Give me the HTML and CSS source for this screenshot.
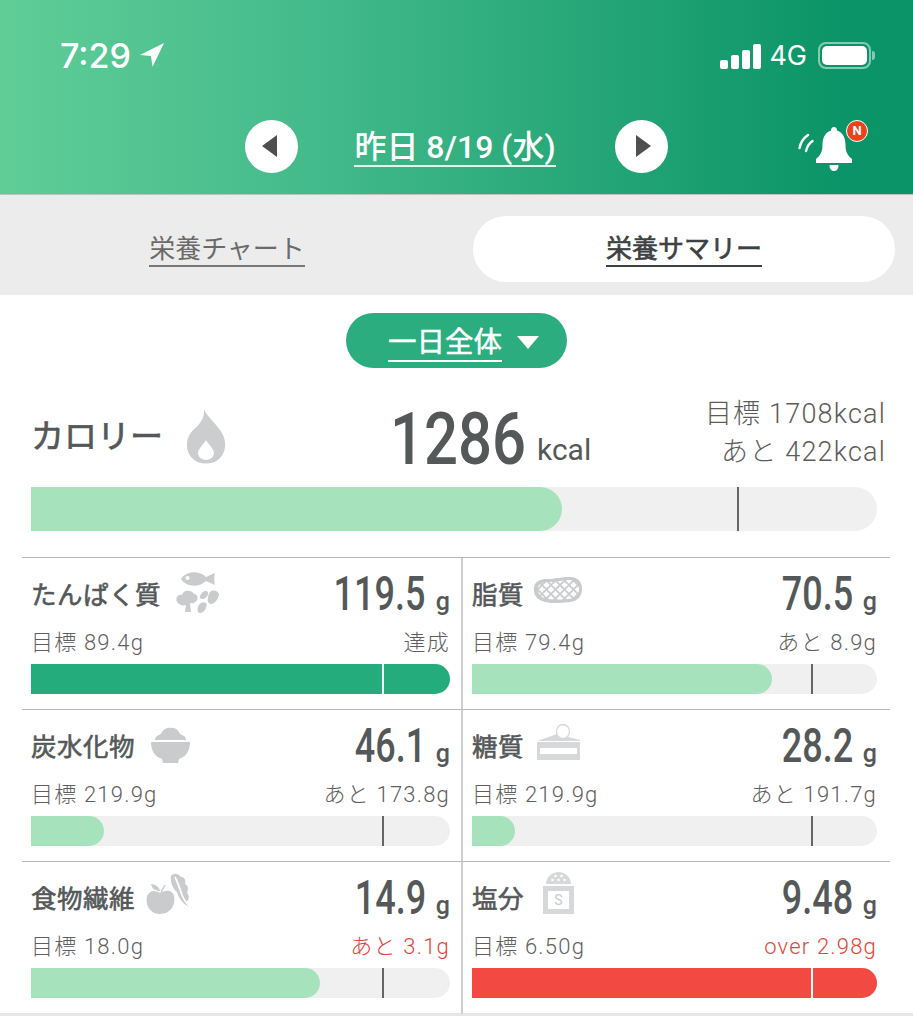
FILE: index.html
```html
<!DOCTYPE html>
<html lang="ja">
<head>
  <meta charset="UTF-8" />
  <title>栄養サマリー</title>
  <meta name="viewport" content="width=device-width, initial-scale=1.0" />
  <link rel="stylesheet" href="styles.css">
</head>
<body>
  <header class="top">
    <div class="status">
      <div class="status-left">
        <span class="time">7:29</span>
        <svg class="loc" viewBox="0 0 24 24"><path d="M24 0 L0 12 L11 13 L12.5 24 Z" fill="#fff"/></svg>
      </div>
      <div class="status-right">
        <div class="signal"><i class="s1"></i><i class="s2"></i><i class="s3"></i><i class="s4"></i></div>
        <span class="net">4G</span>
        <div class="battery"><div class="battery-in"></div></div>
        <div class="battery-tip"></div>
      </div>
    </div>
    <div class="nav">
      <div class="round"><span class="tri-left"></span></div>
      <div class="date"><span>昨日 8/19 (水)</span></div>
      <div class="round"><span class="tri-right"></span></div>
      <div class="bell">
        <svg viewBox="0 0 70 52" width="70" height="52">
          <path d="M1.5 28 C2.5 23 5.5 18 10 15" fill="none" stroke="#fff" stroke-width="2.4" stroke-linecap="round"/>
          <path d="M8 31 C9 27 11 23.5 14.5 21" fill="none" stroke="#fff" stroke-width="2.4" stroke-linecap="round"/>
          <path d="M36 7 C38 7 39 8.5 39 10.5 C45.5 12.5 47.5 19 47.5 25 C47.5 32 50 36 54 39 L54 43 L18 43 L18 39 C22 36 24.5 32 24.5 25 C24.5 19 26.5 12.5 33 10.5 C33 8.5 34 7 36 7 Z" fill="#fff"/>
          <path d="M31.5 45 L40.5 45 C40.5 49 38.5 51 36 51 C33.5 51 31.5 49 31.5 45 Z" fill="#fff"/>
        </svg>
        <span class="badge">N</span>
      </div>
    </div>
  </header>

  <div class="tabs">
    <div class="tab"><span>栄養チャート</span></div>
    <div class="tab active"><span>栄養サマリー</span></div>
  </div>

  <div class="filter-wrap">
    <div class="filter"><span>一日全体</span><i class="tri-down"></i></div>
  </div>

  <section class="calorie">
    <div class="cal-top">
      <div class="cal-label">
        <span>カロリー</span>
        <svg class="flame" viewBox="0 0 40 56"><path fill-rule="evenodd" d="M18 0 C21 8 30 14 36 24 C41 33 40 44 33 50 C27 56 13 56 7 50 C0 44 -1 33 4 25 C8 19 19 14 18 0 Z M20 31 C17 36 12 40 12 44 C12 48 16 51 20 51 C24 51 28 48 28 44 C28 40 23 36 20 31 Z" fill="#cbcdcf"/></svg>
      </div>
      <div class="cal-value"><b class="cal-num">1286</b><span class="cal-unit">kcal</span></div>
      <div class="cal-goal">目標 1708kcal<br>あと 422kcal</div>
    </div>
    <div class="bar bar-big">
      <div class="fill light" style="width:62.8%"></div>
      <i class="mark" style="left:83.5%"></i>
    </div>
  </section>

  <section class="grid">
    <div class="cell">
      <div class="head">
        <span class="name">たんぱく質</span>
        <svg class="icon ic-protein" width="44" height="43" viewBox="0 0 44 43">
          <path fill-rule="evenodd" d="M5 8 C10 0 23 -1 30 6 L39 2 C38 6 38 10 39 14 L30 10 C23 17 10 16 5 8 Z M11.5 5 a2 2 0 1 0 .1 0 Z" fill="#c9cbcd"/>
          <path d="M1 31 C-1 27 2 23 6 24 C7 19 15 18 18 23 C22 23 23 29 19 31 C17 33 15 32 14 32 L15 41 L9 41 L10 34 C7 35 3 34 1 31 Z" fill="#c9cbcd"/>
          <path d="M24 25 C26 20 30 19 32 21 C33 24 30 28 27 28 C25 28 23 27 24 25 Z" fill="#c9cbcd"/>
          <path d="M34 21 C37 18 42 20 43 23 C43 27 39 33 35 33 C32 33 31 29 32 27 C32 25 33 22 34 21 Z" fill="#c9cbcd"/>
          <path d="M22 36 C23 32 28 30 30 32 C32 34 29 41 25 42 C22 43 21 39 22 36 Z" fill="#c9cbcd"/>
        </svg>
        <span class="val"><b class="num">119.5</b><span class="g">g</span></span>
      </div>
      <div class="meta"><span>目標 89.4g</span><span>達成</span></div>
      <div class="bar"><div class="fill dark" style="width:100%"></div><i class="mark white" style="left:83.7%"></i></div>
    </div>

    <div class="cell right">
      <div class="head">
        <span class="name">脂質</span>
        <svg class="icon ic-fat" width="50" height="28" viewBox="0 0 50 28">
          <defs>
            <pattern id="lattice" width="9" height="9" patternUnits="userSpaceOnUse">
              <rect width="9" height="9" fill="#fff"/>
              <path d="M0 0 L9 9 M9 0 L0 9" stroke="#c9cbcd" stroke-width="1.7"/>
            </pattern>
          </defs>
          <path d="M1 11 C2 5 8 3 14 3 C22 3 28 1 37 1 C45 1 49 6 49 13 C49 21 44 25 37 26 C27 27 17 28 9 25 C3 23 0 17 1 11 Z" fill="#c9cbcd"/>
          <path d="M5 11 C6 8 10 6 15 6 C23 6 30 4 37 4 C43 4 46 8 46 13 C46 19 42 22 36 23 C27 24 18 24 11 22 C6 20 4 15 5 11 Z" fill="url(#lattice)"/>
        </svg>
        <span class="val"><b class="num">70.5</b><span class="g">g</span></span>
      </div>
      <div class="meta"><span>目標 79.4g</span><span>あと 8.9g</span></div>
      <div class="bar"><div class="fill light" style="width:74%"></div><i class="mark" style="left:83.7%"></i></div>
    </div>

    <div class="cell">
      <div class="head">
        <span class="name">炭水化物</span>
        <svg class="icon ic-rice" width="39" height="37" viewBox="0 0 39 37">
          <path d="M4 13 C4 9 8 8 10 7 C12 2 16 0 19.5 1 C23 0 27 2 29 7 C31 8 35 9 35 13 Z" fill="#c9cbcd"/>
          <path d="M0 15 L39 15 C39 25 34 30 28 32 L27 36 L12 36 L11 32 C5 30 0 25 0 15 Z" fill="#c9cbcd"/>
        </svg>
        <span class="val"><b class="num">46.1</b><span class="g">g</span></span>
      </div>
      <div class="meta"><span>目標 219.9g</span><span>あと 173.8g</span></div>
      <div class="bar"><div class="fill light" style="width:17.5%"></div><i class="mark" style="left:83.7%"></i></div>
    </div>

    <div class="cell right">
      <div class="head">
        <span class="name">糖質</span>
        <svg class="icon ic-cake" width="43" height="36" viewBox="0 0 43 36">
          <path d="M0 17 L20 10 L43 16 L43 17 Z" fill="#d6d8da"/>
          <ellipse cx="26" cy="7.5" rx="6.5" ry="7" fill="#fff" stroke="#d6d8da" stroke-width="1.3"/>
          <path fill-rule="evenodd" d="M0 18 L43 18 L43 36 L0 36 Z M3 24 L3 30 L40 30 L40 24 Z" fill="#d6d8da"/>
        </svg>
        <span class="val"><b class="num">28.2</b><span class="g">g</span></span>
      </div>
      <div class="meta"><span>目標 219.9g</span><span>あと 191.7g</span></div>
      <div class="bar"><div class="fill light" style="width:10.6%"></div><i class="mark" style="left:83.7%"></i></div>
    </div>

    <div class="cell">
      <div class="head">
        <span class="name">食物繊維</span>
        <svg class="icon ic-veg" width="48" height="42" viewBox="0 0 48 42">
          <path d="M1 23 C4 17 9 17 14 20 C19 17 26 16 28 23 C30 31 25 41 14 41 C4 41 -1 32 1 23 Z" fill="#c9cbcd"/>
          <path d="M5 11 C9 11 13 14 14 18 C10 18 6 16 5 11 Z" fill="#c9cbcd"/>
          <path d="M15 19 L19 12" stroke="#c9cbcd" stroke-width="1.5"/>
          <path d="M25 3 C28 -1 33 1 35 4 C39 4 40 8 39 11 C43 13 42 17 41 20 C44 23 43 27 40 29 L47 36 L42 33 C37 31 32 24 31 19 C27 16 24 9 25 3 Z" fill="#c9cbcd"/>
          <path d="M29 4 C32 10 34 16 36 22 C38 27 41 31 45 35" fill="none" stroke="#fff" stroke-width="1.7"/>
        </svg>
        <span class="val"><b class="num">14.9</b><span class="g">g</span></span>
      </div>
      <div class="meta"><span>目標 18.0g</span><span class="over">あと 3.1g</span></div>
      <div class="bar"><div class="fill light" style="width:69%"></div><i class="mark" style="left:83.7%"></i></div>
    </div>

    <div class="cell right">
      <div class="head">
        <span class="name">塩分</span>
        <svg class="icon ic-salt" width="33" height="43" viewBox="0 0 33 43">
          <path d="M4 13 C4 6 10 1 16.5 1 C23 1 29 6 29 13 Z" fill="#d6d8da"/>
          <g fill="#fff"><circle cx="13.5" cy="5" r="1.3"/><circle cx="19.5" cy="5" r="1.3"/><circle cx="10.5" cy="9" r="1.3"/><circle cx="16.5" cy="9" r="1.3"/><circle cx="22.5" cy="9" r="1.3"/></g>
          <path fill-rule="evenodd" d="M1 15 L32 15 L32 43 L1 43 Z M6 20 L6 38 L27 38 L27 20 Z" fill="#d6d8da"/>
          <text x="16.5" y="34" text-anchor="middle" class="salt-s">S</text>
        </svg>
        <span class="val"><b class="num">9.48</b><span class="g">g</span></span>
      </div>
      <div class="meta"><span>目標 6.50g</span><span class="over">over 2.98g</span></div>
      <div class="bar"><div class="fill red" style="width:100%"></div><i class="mark white" style="left:83.8%"></i></div>
    </div>
  </section>
  <div class="bottom-line"></div>
</body>
</html>
```

FILE: styles.css
```css
* {
  box-sizing: border-box;
  margin: 0;
  padding: 0;
}
body {
  background: #fff;
  color: #555859;
  font-family: 'Roboto', 'Noto Sans CJK JP', sans-serif;
  overflow: hidden;
}

/* header */
.top {
  height: 195px;
  background: linear-gradient(90deg, #60cd97 0%, #43ba8b 35%, #0b9467 92%);
  border-bottom: 1px solid #b8c4bf;
  color: #fff;
}
.status {
  height: 110px;
  padding: 38px 38px 0 60px;
  display: flex;
  justify-content: space-between;
}
.status-left, .status-right {
  display: flex;
  align-items: center;
  height: 34px;
}
.time {
  font-family: 'Inter', sans-serif;
  font-size: 34px;
  font-weight: 500;
}
.loc {
  width: 24px;
  height: 24px;
  margin-left: 9px;
}
.signal {
  display: flex;
  align-items: flex-end;
  gap: 3px;
  height: 25px;
  margin-top: 2px;
}
.signal i {
  display: block;
  width: 8px;
  background: #fff;
  border-radius: 2px;
}
.s1 { height: 9px; }
.s2 { height: 14px; }
.s3 { height: 19px; }
.s4 { height: 25px; }
.net {
  font-family: 'Inter', sans-serif;
  font-size: 27px;
  margin: 0 11px 0 8px;
}
.battery {
  width: 53px;
  height: 27px;
  border: 2px solid rgba(255,255,255,0.5);
  border-radius: 8px;
  padding: 2px;
}
.battery-in {
  height: 100%;
  background: #fff;
  border-radius: 5px;
}
.battery-tip {
  width: 3px;
  height: 9px;
  margin-left: 1px;
  background: rgba(255,255,255,0.5);
  border-radius: 0 3px 3px 0;
}
.nav {
  display: flex;
  align-items: center;
  height: 72px;
  padding-left: 245px;
  padding-right: 45px;
}
.round {
  width: 53px;
  height: 53px;
  border-radius: 50%;
  background: #fff;
  display: flex;
  align-items: center;
  justify-content: center;
}
.tri-left, .tri-right {
  display: block;
  border-top: 11px solid transparent;
  border-bottom: 11px solid transparent;
}
.tri-left {
  border-right: 15px solid #4f4f4f;
  margin-right: 4px;
}
.tri-right {
  border-left: 15px solid #4f4f4f;
  margin-left: 4px;
}
.date {
  width: 317px;
  padding-right: 3px;
  padding-top: 2px;
  text-align: center;
  font-size: 32px;
  font-weight: 500;
}
.date span {
  display: inline-block;
  line-height: 36px;
  border-bottom: 2px solid #e4f5ee;
}
.bell {
  margin-left: auto;
  position: relative;
  width: 70px;
  height: 52px;
}
.bell svg {
  display: block;
}
.badge {
  position: absolute;
  top: 0;
  right: 0;
  width: 22px;
  height: 22px;
  border-radius: 50%;
  background: #e8431c;
  border: 1.5px solid #fff;
  color: #fff;
  font-size: 13px;
  font-weight: 700;
  line-height: 19px;
  text-align: center;
}

/* tabs */
.tabs {
  height: 100px;
  background: #ececec;
  padding: 21px 18px 13px 16px;
  display: flex;
  gap: 35px;
}
.tab {
  flex: 1;
  border-radius: 33px;
  display: flex;
  align-items: center;
  justify-content: center;
  font-size: 26px;
  color: #6a6a6a;
}
.tab span {
  padding-top: 2px;
  line-height: 32px;
  border-bottom: 2px solid #777;
}
.tab.active {
  background: #fff;
  color: #3e4142;
  -webkit-text-stroke: 0.6px #3e4142;
}
.tab.active span {
  border-bottom-color: #3e4142;
}

/* filter */
.filter-wrap {
  display: flex;
  justify-content: center;
  padding-top: 18px;
}
.filter {
  width: 221px;
  height: 55px;
  border-radius: 28px;
  background: #2bad80;
  color: #fff;
  font-size: 28.5px;
  -webkit-text-stroke: 0.5px #fff;
  display: flex;
  align-items: center;
  padding-left: 42px;
}
.filter span {
  margin-top: 7px;
  line-height: 34px;
  border-bottom: 2px solid #fff;
}
.tri-down {
  display: block;
  margin-top: 4px;
  margin-left: 15px;
  border-left: 11px solid transparent;
  border-right: 11px solid transparent;
  border-top: 13px solid #fff;
}

/* calories */
.calorie {
  padding: 0 36px 26px 31px;
}
.cal-top {
  height: 119px;
  padding-top: 26px;
  display: flex;
  align-items: flex-start;
}
.cal-label {
  width: 359px;
  display: flex;
  align-items: center;
  gap: 23px;
  height: 80px;
  font-size: 33px;
  -webkit-text-stroke: 0.7px #555859;
}
.flame {
  width: 40px;
  height: 56px;
  margin-top: 6px;
}
.cal-value {
  display: flex;
  align-items: flex-start;
  height: 80px;
  padding-top: 6px;
}
.cal-num {
  display: block;
  width: 147px;
  font-size: 73px;
  line-height: 78px;
  font-weight: 500;
  transform: scaleX(0.82);
  transform-origin: left center;
}
.cal-unit {
  margin-top: 32px;
  font-size: 30px;
  line-height: 36px;
}
.cal-goal {
  margin-left: auto;
  margin-right: -9px;
  margin-top: 1px;
  text-align: right;
  font-size: 27px;
  letter-spacing: 1.2px;
  font-weight: 300;
  line-height: 38px;
  color: #5c5c5c;
}

/* bars */
.bar {
  position: relative;
  height: 30px;
  background: #f0f0f0;
  border-radius: 0 15px 15px 0;
}
.bar-big {
  height: 44px;
  border-radius: 0 22px 22px 0;
}
.fill {
  height: 100%;
  border-radius: 0 15px 15px 0;
}
.bar-big .fill {
  border-radius: 0 22px 22px 0;
}
.light { background: #a6e3bd; }
.dark { background: #24ac7d; }
.red { background: #f24a43; }
.mark {
  position: absolute;
  top: 0;
  bottom: 0;
  width: 2px;
  background: #666;
}
.mark.white {
  background: #fff;
}

/* nutrient grid */
.grid {
  margin: 0 23px 0 22px;
  border-top: 1px solid #b5b5b5;
  display: grid;
  grid-template-columns: 439px 429px;
  grid-auto-rows: 152px;
}
.cell {
  padding: 14px 11px 0 9px;
  border-bottom: 1px solid #b5b5b5;
}
.cell.right {
  border-left: 2px solid #cfcfcf;
  padding: 14px 13px 0 9px;
}
.cell:nth-child(n+5) {
  border-bottom: none;
}
.head {
  display: flex;
  align-items: center;
  height: 44px;
}
.name {
  margin-top: -4px;
  font-size: 25.5px;
  letter-spacing: 0.5px;
  -webkit-text-stroke: 0.6px #555859;
}
.icon {
  display: block;
  margin-top: -4px;
}
.ic-protein { margin-left: 15px; }
.ic-fat { margin-left: 9px; margin-top: -8px; }
.ic-rice { margin-left: 16px; margin-top: -2px; }
.ic-cake { margin-left: 13px; margin-top: -8px; }
.ic-veg { margin-left: 11px; margin-top: -8px; }
.ic-salt { margin-left: 18px; margin-top: -12px; }
.salt-s {
  font-family: 'Roboto', sans-serif;
  font-size: 14px;
  fill: #c9cbcd;
}
.val {
  margin-left: auto;
  display: flex;
  align-items: baseline;
}
.num {
  display: block;
  font-size: 48px;
  line-height: 44px;
  font-weight: 500;
  transform: scaleX(0.75);
  transform-origin: right center;
}
.g {
  font-size: 25px;
  font-weight: 500;
  margin-left: 10px;
}
.meta {
  display: flex;
  justify-content: space-between;
  height: 30px;
  margin-top: 12px;
  margin-bottom: 6px;
  font-size: 22px;
  letter-spacing: 1.2px;
  font-weight: 300;
  line-height: 30px;
  color: #5f5f5f;
}
.over {
  color: #e2453c;
}
.bottom-line {
  height: 3px;
  margin-top: -1px;
  background: #e6e6e6;
}
```
